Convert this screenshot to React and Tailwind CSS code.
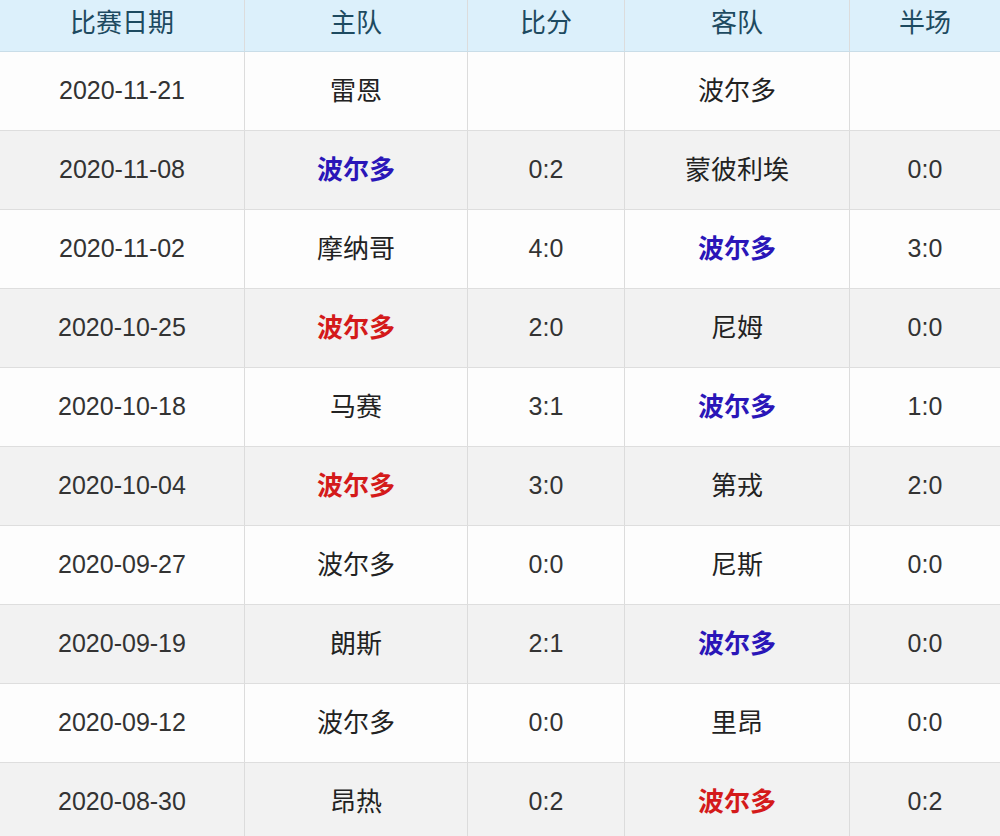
const COLS = 'grid grid-cols-[245px_223px_157px_225px_150px]'

const rows = [
  ['2020-11-21', ['雷恩'], '', ['波尔多'], ''],
  ['2020-11-08', ['波尔多', 'b'], '0:2', ['蒙彼利埃'], '0:0'],
  ['2020-11-02', ['摩纳哥'], '4:0', ['波尔多', 'b'], '3:0'],
  ['2020-10-25', ['波尔多', 'r'], '2:0', ['尼姆'], '0:0'],
  ['2020-10-18', ['马赛'], '3:1', ['波尔多', 'b'], '1:0'],
  ['2020-10-04', ['波尔多', 'r'], '3:0', ['第戎'], '2:0'],
  ['2020-09-27', ['波尔多'], '0:0', ['尼斯'], '0:0'],
  ['2020-09-19', ['朗斯'], '2:1', ['波尔多', 'b'], '0:0'],
  ['2020-09-12', ['波尔多'], '0:0', ['里昂'], '0:0'],
  ['2020-08-30', ['昂热'], '0:2', ['波尔多', 'r'], '0:2'],
]

function Team({ t }) {
  const [name, c] = t
  const cls = c === 'b' ? 'text-[#2a16b8] font-bold' : c === 'r' ? 'text-[#d41a1a] font-bold' : 'text-[#222]'
  return <span className={`text-[26px] ${cls}`}>{name}</span>
}

const CELL = 'flex items-center justify-center border-r border-[#dcdcdc] last:border-r-0'

export default function App() {
  return (
    <div className="w-[1000px] h-[836px] overflow-hidden bg-white text-[25px] text-[#333]" style={{ fontFamily: '"Liberation Sans", "Noto Sans CJK SC", sans-serif' }}>
      <div className={`${COLS} h-[52px] bg-[#dcf0fb] text-[#1d4a60] text-[26px] border-b border-[#c9dde8]`}>
        {['比赛日期', '主队', '比分', '客队', '半场'].map(h => (
          <div key={h} className={`${CELL} border-[#c9dde8] pb-1`}>{h}</div>
        ))}
      </div>
      {rows.map((r, i) => (
        <div key={i} className={`${COLS} h-[79px] border-b border-[#dedede] ${i % 2 ? 'bg-[#f2f2f2]' : 'bg-[#fdfdfd]'}`}>
          <div className={CELL}>{r[0]}</div>
          <div className={CELL}><Team t={r[1]} /></div>
          <div className={CELL}>{r[2]}</div>
          <div className={CELL}><Team t={r[3]} /></div>
          <div className={CELL}>{r[4]}</div>
        </div>
      ))}
    </div>
  )
}
